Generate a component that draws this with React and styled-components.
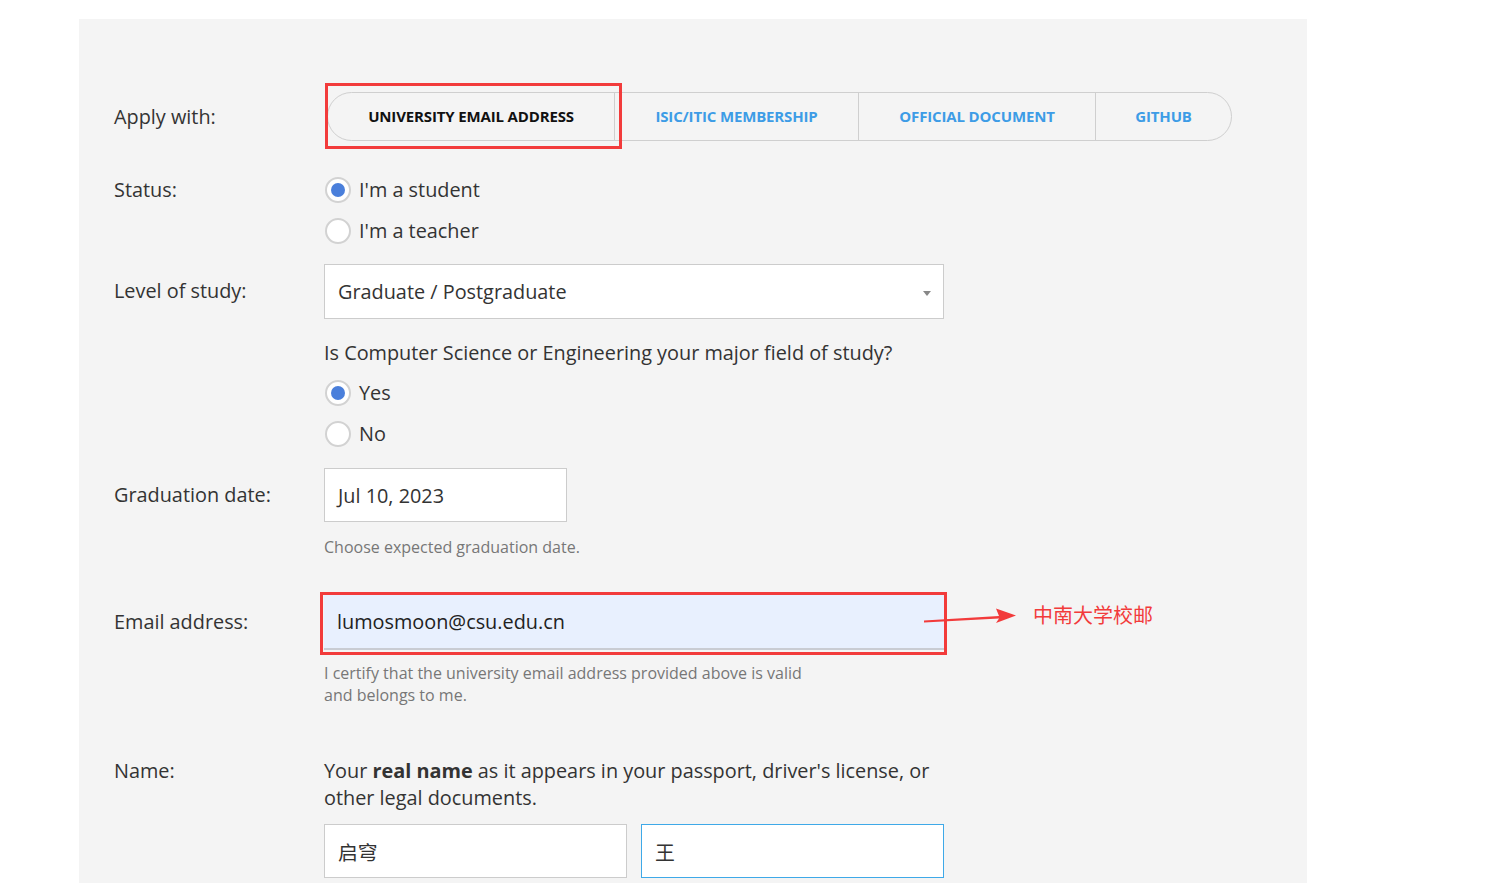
import React from "react";
import styled, { createGlobalStyle } from "styled-components";

const GlobalStyle = createGlobalStyle`
    body {
        margin: 0;
        background: #fff;
        font-family: "Open Sans", "Noto Sans", "Noto Sans CJK SC", sans-serif;
        color: #333;
    }
`;

const tabs = [
    { label: "University email address", width: 286, active: true },
    { label: "ISIC/ITIC membership", width: 244 },
    { label: "Official document", width: 237 },
    { label: "GitHub", width: 137 },
];

const App = () => {
    return (
        <>
            <GlobalStyle />
            <Panel>
                <Row $center>
                    <Label>Apply with:</Label>
                    <TabGroup>
                        {tabs.map((tab) => (
                            <Tab key={tab.label} $active={tab.active} $width={tab.width}>
                                {tab.label}
                            </Tab>
                        ))}
                        <TabHighlight />
                    </TabGroup>
                </Row>

                <Row $mt={28}>
                    <Label $lh={41}>Status:</Label>
                    <div>
                        <Radio checked label="I'm a student" />
                        <Radio label="I'm a teacher" />
                    </div>
                </Row>

                <Row $mt={13}>
                    <Label $lh={54}>Level of study:</Label>
                    <div>
                        <Select>
                            Graduate / Postgraduate
                            <Caret />
                        </Select>
                        <Question>
                            Is Computer Science or Engineering your major field
                            of study?
                        </Question>
                        <RadioList>
                            <Radio checked label="Yes" />
                            <Radio label="No" />
                        </RadioList>
                    </div>
                </Row>

                <Row $mt={14}>
                    <Label $lh={53}>Graduation date:</Label>
                    <div>
                        <Input $width={243} $height={54}>Jul 10, 2023</Input>
                        <Help $mt={14}>Choose expected graduation date.</Help>
                    </div>
                </Row>

                <Row $mt={36}>
                    <Label $lh={56}>Email address:</Label>
                    <div>
                        <EmailWrap>
                            <EmailInput>lumosmoon@csu.edu.cn</EmailInput>
                            <EmailHighlight />
                            <Annotation>
                                <svg width="95" height="16" viewBox="0 0 95 16">
                                    <polygon
                                        points="0,12.5 75,8 72,0.5 92,7.5 72,15 75,10.5 0,14.5"
                                        fill="#f23b3b"
                                    />
                                </svg>
                                <AnnotationText>中南大学校邮</AnnotationText>
                            </Annotation>
                        </EmailWrap>
                        <Help $mt={12}>
                            I certify that the university email address provided
                            above is valid
                            <br />
                            and belongs to me.
                        </Help>
                    </div>
                </Row>

                <Row $mt={51}>
                    <Label $lh={27}>Name:</Label>
                    <div>
                        <NameText>
                            Your <b>real name</b> as it appears in your
                            passport, driver's license, or
                            <br />
                            other legal documents.
                        </NameText>
                        <NameRow>
                            <Input $width={303} $height={54}>启穹</Input>
                            <Input $width={303} $height={54} $focus>
                                王
                            </Input>
                        </NameRow>
                    </div>
                </Row>
            </Panel>
        </>
    );
};

export default App;

const Radio = ({ checked, label }) => {
    return (
        <RadioRow>
            <RadioCircle>{checked && <RadioDot />}</RadioCircle>
            <span>{label}</span>
        </RadioRow>
    );
};

const Panel = styled.div`
    margin: 19px 0 0 79px;
    width: 1228px;
    min-height: 864px;
    padding: 73px 0 0 35px;
    box-sizing: border-box;
    background: #f4f4f4;
`;

const Row = styled.div`
    display: grid;
    grid-template-columns: 210px 1fr;
    align-items: ${(p) => (p.$center ? "center" : "start")};
    margin-top: ${(p) => p.$mt || 0}px;
`;

const Label = styled.div`
    font-size: 19.85px;
    line-height: ${(p) => p.$lh || 49}px;
    color: #333;
`;

const TabGroup = styled.div`
    position: relative;
    display: flex;
    width: 905px;
    height: 49px;
    margin-left: 3px;
    border: 1px solid #cfcfcf;
    border-radius: 25px;
    box-sizing: border-box;
`;

const Tab = styled.div`
    width: ${(p) => p.$width}px;
    flex-shrink: 0;
    display: flex;
    align-items: center;
    justify-content: center;
    padding-bottom: 1px;
    font-size: 15px;
    font-weight: 700;
    text-transform: uppercase;
    letter-spacing: -0.15px;
    color: ${(p) => (p.$active ? "#111" : "#3d9ce6")};
    box-sizing: border-box;

    & + & {
        border-left: 1px solid #cfcfcf;
    }

    &:nth-child(4) {
        flex: 1;
        width: auto;
    }
`;

const TabHighlight = styled.div`
    position: absolute;
    left: -3px;
    top: -10px;
    width: 297px;
    height: 66px;
    border: 3px solid #f23b3b;
    box-sizing: border-box;
    pointer-events: none;
`;

const RadioList = styled.div`
    margin-top: 6px;
`;

const RadioRow = styled.div`
    display: flex;
    align-items: center;
    height: 41px;
    font-size: 19.85px;
    color: #333;

    > span {
        margin-left: 8px;
    }
`;

const RadioCircle = styled.div`
    width: 26px;
    height: 26px;
    margin-left: 1px;
    border-radius: 50%;
    border: 2px solid #d2d2d2;
    background: #fff;
    box-sizing: border-box;
    display: flex;
    align-items: center;
    justify-content: center;
`;

const RadioDot = styled.div`
    width: 14px;
    height: 14px;
    border-radius: 50%;
    background: #4a7fdb;
`;

const Select = styled.div`
    position: relative;
    width: 620px;
    height: 55px;
    box-sizing: border-box;
    border: 1px solid #cccccc;
    background: #fff;
    padding-left: 13px;
    display: flex;
    align-items: center;
    font-size: 19.85px;
    color: #333;
`;

const Caret = styled.div`
    position: absolute;
    right: 12px;
    top: 26px;
    width: 0;
    height: 0;
    border-left: 4px solid transparent;
    border-right: 4px solid transparent;
    border-top: 5px solid #888;
`;

const Question = styled.div`
    margin-top: 20px;
    font-size: 19.85px;
    line-height: 27px;
    color: #333;
`;

const Input = styled.div`
    width: ${(p) => p.$width}px;
    height: ${(p) => p.$height}px;
    box-sizing: border-box;
    border: 1px solid ${(p) => (p.$focus ? "#3fa9e8" : "#cccccc")};
    background: #fff;
    padding-left: 13px;
    display: flex;
    align-items: center;
    font-size: 19.85px;
    color: #333;
`;

const EmailWrap = styled.div`
    position: relative;
    width: 620px;
`;

const EmailInput = styled.div`
    height: 56px;
    box-sizing: border-box;
    background: #e8f0fe;
    border-bottom: 2px solid #c9ccd3;
    padding-left: 13px;
    display: flex;
    align-items: center;
    font-size: 19.85px;
    color: #222;
`;

const EmailHighlight = styled.div`
    position: absolute;
    left: -4px;
    top: -2px;
    width: 627px;
    height: 63px;
    border: 3px solid #f23b3b;
    box-sizing: border-box;
    pointer-events: none;
`;

const Annotation = styled.div`
    position: absolute;
    left: 600px;
    top: 14px;
    display: flex;
    align-items: flex-start;
    gap: 14px;
    white-space: nowrap;

    > svg {
        flex-shrink: 0;
    }
`;

const AnnotationText = styled.span`
    margin-top: -6px;
    font-family: "Noto Sans CJK SC", sans-serif;
    font-size: 20px;
    line-height: 26px;
    color: #f23b3b;
`;

const Help = styled.div`
    margin-top: ${(p) => p.$mt || 0}px;
    font-size: 16px;
    line-height: 22px;
    color: #777;
`;

const NameText = styled.div`
    font-size: 19.85px;
    line-height: 27px;
    color: #333;

    b {
        font-weight: 700;
    }
`;

const NameRow = styled.div`
    display: flex;
    gap: 14px;
    margin-top: 13px;
`;
